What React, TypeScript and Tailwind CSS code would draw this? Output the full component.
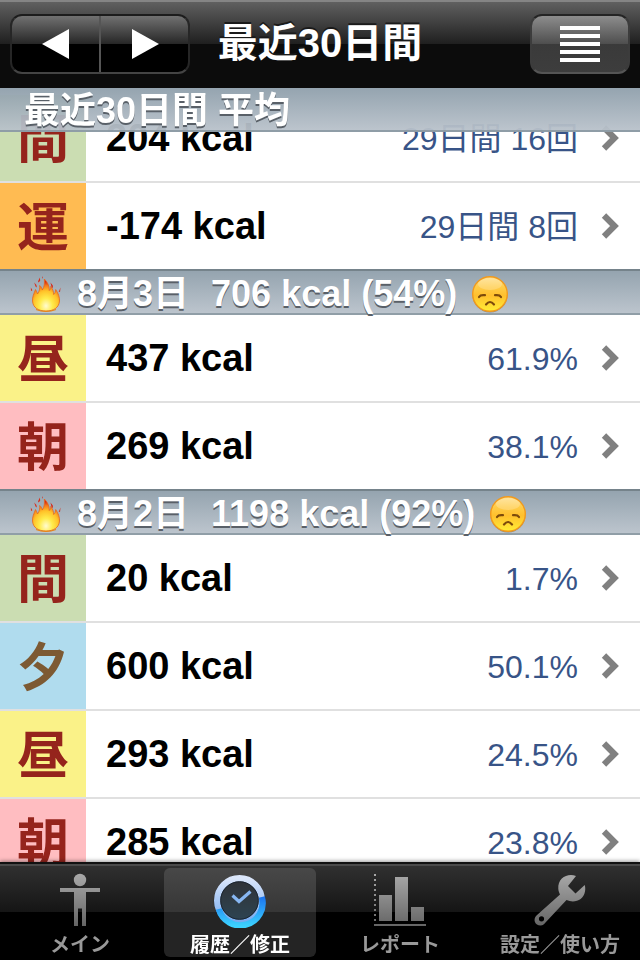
import React, { useState } from 'react';
import clsx from 'clsx';

type Meal = 'snack' | 'exercise' | 'lunch' | 'breakfast' | 'dinner';

interface Entry {
  meal: Meal;
  kcal: number;
  detail: string;
}

interface Day {
  date: string;
  total: string;
  entries: Entry[];
}

const MEALS: Record<Meal, { label: string; className: string }> = {
  snack: { label: '間', className: 'bg-[#cbddb2] text-[#95241c]' },
  exercise: { label: '運', className: 'bg-[#ffbb52] text-[#95241c]' },
  lunch: { label: '昼', className: 'bg-[#faf288] text-[#95241c]' },
  breakfast: { label: '朝', className: 'bg-[#ffbdc1] text-[#95241c]' },
  dinner: { label: '夕', className: 'bg-[#b0dcee] text-[#7d5a33]' },
};

const AVERAGE: Entry[] = [
  { meal: 'snack', kcal: 204, detail: '29日間 16回' },
  { meal: 'exercise', kcal: -174, detail: '29日間 8回' },
];

const DAYS: Day[] = [
  {
    date: '8月3日',
    total: '706 kcal (54%)',
    entries: [
      { meal: 'lunch', kcal: 437, detail: '61.9%' },
      { meal: 'breakfast', kcal: 269, detail: '38.1%' },
    ],
  },
  {
    date: '8月2日',
    total: '1198 kcal (92%)',
    entries: [
      { meal: 'snack', kcal: 20, detail: '1.7%' },
      { meal: 'dinner', kcal: 600, detail: '50.1%' },
      { meal: 'lunch', kcal: 293, detail: '24.5%' },
      { meal: 'breakfast', kcal: 285, detail: '23.8%' },
    ],
  },
];

// --- Icons ---
const Flame = () => (
  <svg width="34" height="38" viewBox="0 0 34 38" className="shrink-0" aria-hidden="true">
    <defs>
      <radialGradient id="flame" cx="0.5" cy="0.84" r="0.75">
        <stop offset="0" stopColor="#fffbd0" />
        <stop offset="0.32" stopColor="#ffec4c" />
        <stop offset="0.62" stopColor="#ffc329" />
        <stop offset="0.85" stopColor="#f5771b" />
        <stop offset="1" stopColor="#d92a12" />
      </radialGradient>
    </defs>
    <path
      d="M17 36C9 36 4 32.500 3.500 26C3.200 22 5 18.500 6.500 14.500C7.500 16 8 17.500 8.500 19C10.500 16 11 13.500 10.700 10.500C12.500 12 13 13.500 13.300 15C15.500 12 15.700 8 15.300 4C18.500 7 20.500 11 20.300 15.500C21.500 14.500 21.800 13 21.700 11.500C24 14 24.500 17 24.700 19.500C26 18.500 26.500 16.500 26.700 14.500C29.500 18.500 30.700 22.500 30.500 26C30 32.500 25 36 17 36Z"
      fill="url(#flame)"
      stroke="#e5681d"
      strokeWidth="0.8"
    />
    <path d="M7 34.500Q17 38.500 27 34.500" fill="none" stroke="#e88417" strokeWidth="1.200" />
    <path
      d="M9 6.500l1.800-4 .4 3-1.500 2zM2 16l-.2-3.500 1.600 2.700zM6.500 11.500l-1.300-4 2.200 2.500.5 2.500zM22.500 12l-1-4.500 2.300 3 .2 2.500zM31.500 12.500l-.4 4-1.500.8zM13 3l.4-2 .5 2.500z"
      fill="#d52c1c"
    />
  </svg>
);

const SadFace = () => (
  <svg width="38" height="38" viewBox="0 0 38 38" className="shrink-0" aria-hidden="true">
    <defs>
      <linearGradient id="face" x1="0" y1="0" x2="0" y2="1">
        <stop offset="0" stopColor="#ffdf8a" />
        <stop offset="0.3" stopColor="#ffcc48" />
        <stop offset="0.55" stopColor="#ffc02d" />
        <stop offset="1" stopColor="#ffee35" />
      </linearGradient>
    </defs>
    <circle cx="19" cy="20" r="17.500" fill="#6e6455" opacity="0.6" />
    <circle cx="19" cy="19" r="17.300" fill="url(#face)" stroke="#f19a1d" strokeWidth="1.400" />
    <ellipse cx="19" cy="9" rx="12" ry="6" fill="#fff" opacity="0.22" />
    <g fill="none" stroke="#7d4b0b" strokeWidth="2.200" strokeLinecap="round">
      <path d="M8 22Q9.500 19.500 14 20.200" />
      <path d="M24 20.200Q28.500 19.500 30 22" />
      <path d="M15 29.500Q19 24.500 23 29.500" />
    </g>
  </svg>
);

const Chevron = () => (
  <svg width="20" height="28" viewBox="0 0 20 28" className="shrink-0" aria-hidden="true">
    <path d="M4 3.500L14.500 14L4 24.500" fill="none" stroke="#808080" strokeWidth="6.200" />
  </svg>
);

const IconGradient = () => (
  <svg width="0" height="0" className="absolute" aria-hidden="true">
    <defs>
      <linearGradient id="grey" gradientUnits="userSpaceOnUse" x1="0" y1="0" x2="0" y2="56">
        <stop offset="0" stopColor="#ababab" />
        <stop offset="1" stopColor="#636363" />
      </linearGradient>
      <linearGradient id="ringTop" x1="0" y1="0" x2="0" y2="1">
        <stop offset="0" stopColor="#dbe6fa" />
        <stop offset="1" stopColor="#74aaf0" />
      </linearGradient>
      <linearGradient id="ringBottom" gradientUnits="userSpaceOnUse" x1="0" y1="24" x2="0" y2="54">
        <stop offset="0" stopColor="#1b72ee" />
        <stop offset="1" stopColor="#3cd2ff" />
      </linearGradient>
      <linearGradient id="dial" x1="0" y1="0" x2="0" y2="1">
        <stop offset="0" stopColor="#303236" />
        <stop offset="1" stopColor="#2d4452" />
      </linearGradient>
    </defs>
  </svg>
);

const PersonIcon = () => (
  <svg width="60" height="56" viewBox="0 0 60 56" aria-hidden="true">
    <g fill="url(#grey)">
      <circle cx="30" cy="8" r="6.200" />
      <path d="M10 16H50V20H36V54H32V36.500H28V54H24V20H10Z" />
    </g>
  </svg>
);

const ClockIcon = () => (
  <svg width="60" height="56" viewBox="0 0 60 56" aria-hidden="true">
    <circle cx="29.500" cy="29" r="26" fill="#000" opacity="0.25" />
    <circle cx="29.500" cy="28.500" r="20" fill="url(#dial)" />
    <circle cx="29.500" cy="28.500" r="22.300" fill="none" stroke="url(#ringTop)" strokeWidth="6.400" />
    <path d="M51.800 25A22.300 22.300 0 0 1 8.800 37" fill="none" stroke="url(#ringBottom)" strokeWidth="6.400" />
    <circle cx="29.500" cy="28.500" r="18.800" fill="none" stroke="#1a2430" strokeWidth="1" />
    <path d="M22.500 23.500L29 29.500L40.500 19.500" fill="none" stroke="#87b7f2" strokeWidth="3.200" />
  </svg>
);

const ChartIcon = () => (
  <svg width="60" height="56" viewBox="0 0 60 56" aria-hidden="true">
    <g fill="url(#grey)">
      <path d="M9 23H22V49H9ZM25 5H38V49H25ZM41 35H54V49H41ZM4 52H56V54H4Z" />
      <path d="M4 2h2v2h-2zM4 7h2v2h-2zM4 12h2v2h-2zM4 17h2v2h-2zM4 22h2v2h-2zM4 27h2v2h-2zM4 32h2v2h-2zM4 37h2v2h-2zM4 42h2v2h-2zM4 47h2v2h-2z" />
    </g>
  </svg>
);

const WrenchIcon = () => (
  <svg width="60" height="56" viewBox="0 0 60 56" aria-hidden="true">
    <path
      fillRule="evenodd"
      d="M46 4C38 .8 27.500 5.500 28.300 17C28.500 19.500 29.500 21.500 30 22.500L6.500 43.500C2.500 47.500 5 53.500 10.500 53.500C13 53.500 14.500 52 15.500 50.500L36.500 28C44 31.500 53.500 28.500 55 19.500C55.500 17 55.200 14.500 54.700 13L45.500 21.500L38 14ZM11.500 44.200A2.600 2.600 0 1 1 11.500 49.400A2.600 2.600 0 1 1 11.500 44.200Z"
      fill="url(#grey)"
    />
  </svg>
);

const TABS = [
  { label: 'メイン', Icon: PersonIcon },
  { label: '履歴／修正', Icon: ClockIcon },
  { label: 'レポート', Icon: ChartIcon },
  { label: '設定／使い方', Icon: WrenchIcon },
];

const SectionHeader = ({ children, className }: { children: React.ReactNode; className?: string }) => (
  <h2
    className={clsx(
      'flex items-center border-b-2 border-[#8f9ca5]/80 bg-linear-to-b from-[#8f9fab]/95 to-[#b8c1ca]/95 pt-[3px] text-4xl leading-none font-bold whitespace-pre text-white [text-shadow:0_2px_0_#596068]',
      className,
    )}
  >
    {children}
  </h2>
);

const EntryRow = ({ entry }: { entry: Entry }) => {
  const meal = MEALS[entry.meal];
  return (
    <li className="border-b-2 border-[#e0e0e0] last:border-b-0">
      <a href="#entry" className="flex h-[86px] items-center bg-white pr-5">
        <span
          className={clsx(
            'flex h-full w-[86px] shrink-0 items-center justify-center pt-1 text-[52px] leading-none font-bold',
            meal.className,
          )}
        >
          {meal.label}
        </span>
        <span className="ml-5 flex-1 text-[38px] leading-none font-bold text-black">{entry.kcal} kcal</span>
        <span className="mr-[22px] pt-0.5 text-[32px] leading-none text-[#385487]">{entry.detail}</span>
        <Chevron />
      </a>
    </li>
  );
};

const App: React.FC = () => {
  const [activeTab, setActiveTab] = useState(1);

  return (
    <div className="flex h-screen flex-col bg-white font-['Liberation_Sans','Noto_Sans_CJK_JP',sans-serif]">
      <IconGradient />

      {/* Navigation bar */}
      <header className="grid h-22 shrink-0 grid-cols-[1fr_auto_1fr] items-center border-t-2 border-[#858585] bg-[linear-gradient(#606060_0,#1f1f1f_42px,#0c0c0c_42px,#0c0c0c_100%)] px-[10px] pb-0.5">
        <div className="flex h-15 w-[180px] overflow-hidden rounded-xl border-2 border-t-[#1c1c1c] border-r-[#262626] border-b-[#444] border-l-[#262626] bg-[linear-gradient(#717171_0,#262626_28px,#000_28px,#000_100%)]">
          <button type="button" aria-label="前へ" className="flex flex-1 items-center justify-center border-r-2 border-[#555]">
            <svg width="28" height="30" viewBox="0 0 28 30">
              <path d="M0 15L27 0V30Z" fill="#fff" />
            </svg>
          </button>
          <button type="button" aria-label="次へ" className="flex flex-1 items-center justify-center">
            <svg width="28" height="30" viewBox="0 0 28 30">
              <path d="M28 15L1 0V30Z" fill="#fff" />
            </svg>
          </button>
        </div>
        <h1 className="pb-0.5 text-[40px] leading-none font-bold text-white [text-shadow:0_-2px_0_#1a1a1a]">最近30日間</h1>
        <button
          type="button"
          aria-label="メニュー"
          className="flex h-15 w-[100px] items-center justify-center justify-self-end rounded-xl border-2 border-t-[#242424] border-r-[#3c3c3c] border-b-[#555] border-l-[#3c3c3c] bg-[linear-gradient(#8d8d8d_0,#4e4e4e_28px,#3a3a3a_28px,#3d3d3d_100%)]"
        >
          <svg width="40" height="36" viewBox="0 0 40 36">
            <path d="M0 0H40V4H0ZM0 8H40V12H0ZM0 16H40V20H0ZM0 24H40V28H0ZM0 32H40V36H0Z" fill="#fff" />
          </svg>
        </button>
      </header>

      {/* History list */}
      <main className="min-h-0 flex-1 overflow-y-auto [scrollbar-width:none]">
        <section>
          <SectionHeader className="sticky top-0 z-10 h-11 pl-6">最近30日間 平均</SectionHeader>
          <ul className="-mt-[37px]">
            {AVERAGE.map((entry) => (
              <EntryRow key={entry.meal} entry={entry} />
            ))}
          </ul>
        </section>
        {DAYS.map((day) => (
          <section key={day.date}>
            <SectionHeader className="h-[46px] border-t-2 border-t-[#75838b] pl-[29px]">
              <Flame />
              <span className="mr-[22px] ml-[14px]">{day.date}</span>
              <span className="mr-[14px]">{day.total}</span>
              <SadFace />
            </SectionHeader>
            <ul>
              {day.entries.map((entry) => (
                <EntryRow key={entry.meal} entry={entry} />
              ))}
            </ul>
          </section>
        ))}
      </main>

      {/* Tab bar */}
      <nav className="z-10 grid h-[98px] shrink-0 grid-cols-4 border-t-2 border-[#111] bg-[linear-gradient(#4a4a4a_0,#4a4a4a_2px,#303030_2px,#151515_48px,#000_48px,#000_100%)] shadow-[0_-1px_4px_#0006]">
        {TABS.map(({ label, Icon }, i) => (
          <button
            key={label}
            type="button"
            onClick={() => setActiveTab(i)}
            className={clsx(
              'm-1 flex flex-col items-center rounded-md pt-1 text-xl leading-6 font-bold whitespace-nowrap',
              activeTab === i
                ? 'bg-[linear-gradient(#484848_0,#363636_44px,#242424_44px,#242424_100%)] text-white'
                : 'text-[#999]',
            )}
          >
            <Icon />
            <span className="mt-[5px]">{label}</span>
          </button>
        ))}
      </nav>
    </div>
  );
};

export default App;
